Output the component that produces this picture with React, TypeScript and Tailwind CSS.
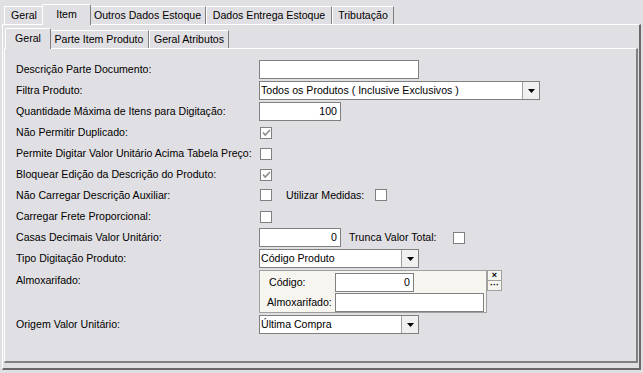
import React from "react";

function Check({ checked }: { checked?: boolean }) {
  return (
    <div className="w-[12px] h-[12px] border border-[#808080] bg-white flex items-center justify-center">
      {checked ? (
        <svg width="9" height="8" viewBox="0 0 9 8">
          <path d="M1 3.5 L3.2 6 L8 1" fill="none" stroke="#8a8a8a" strokeWidth="1.6" />
        </svg>
      ) : null}
    </div>
  );
}

function Arrow() {
  return (
    <div className="w-[17px] border-l border-[#a0a0a0] bg-[#f0f0f0] flex items-center justify-center">
      <svg width="7" height="4" viewBox="0 0 7 4">
        <path d="M0 0 H7 L3.5 4 Z" fill="#000" />
      </svg>
    </div>
  );
}

function Select({ value, width }: { value: string; width: string }) {
  return (
    <div className={`${width} h-[19px] border border-[#808080] bg-white flex`}>
      <div className="flex-1 pl-[1px] leading-[17px]">{value}</div>
      <Arrow />
    </div>
  );
}

function Input({ value, width, right }: { value?: string; width: string; right?: boolean }) {
  return (
    <div
      className={`${width} h-[19px] border border-[#808080] bg-white leading-[17px] px-[3px] ${
        right ? "text-right" : ""
      }`}
    >
      {value}
    </div>
  );
}

function Row({ label, children, tall }: { label: string; children: React.ReactNode; tall?: boolean }) {
  return (
    <div className={`flex ${tall ? "items-start h-[45px]" : "items-center h-[21px]"}`}>
      <div className={`w-[243px] ${tall ? "pt-[4px]" : ""}`}>{label}</div>
      <div className="flex items-center">{children}</div>
    </div>
  );
}

function Tab({ label, active, w }: { label: string; active?: boolean; w: string }) {
  return active ? (
    <div
      className={`${w} h-[21px] -mx-[2px] -mb-px relative z-10 bg-[#e0dfe3] border-t border-l border-white border-r border-r-[#808080] rounded-t-[2px] flex justify-center pt-[2px]`}
    >
      {label}
    </div>
  ) : (
    <div
      className={`${w} h-[18px] bg-[#e0dfe3] border-t border-l border-white border-r border-r-[#808080] flex justify-center items-center`}
    >
      {label}
    </div>
  );
}

export default function App() {
  const copy = {
    outerTabs: ["Geral", "Item", "Outros Dados Estoque", "Dados Entrega Estoque", "Tributação"],
    innerTabs: ["Geral", "Parte Item Produto", "Geral Atributos"],
  };

  return (
    <div className="w-[643px] h-[373px] bg-[#e0dfe3] text-black text-[10.6px] whitespace-nowrap font-['Liberation_Sans',Arial,sans-serif] pt-[3px] px-[2px] overflow-hidden">
      {/* top tabs */}
      <div className="flex items-end h-[21px] pl-[2px]">
        <Tab label={copy.outerTabs[0]} w="w-[40px]" />
        <Tab label={copy.outerTabs[1]} w="w-[49px]" active />
        <Tab label={copy.outerTabs[2]} w="w-[117px]" />
        <Tab label={copy.outerTabs[3]} w="w-[126px]" />
        <Tab label={copy.outerTabs[4]} w="w-[62px]" />
      </div>

      <div className="h-[346px] border-t border-l border-white border-r-2 border-b-2 border-r-[#696969] border-b-[#696969] px-[1px] pt-[2px]">
        {/* inner tabs */}
        <div className="flex items-end h-[21px] pl-[3px]">
          <Tab label={copy.innerTabs[0]} w="w-[46px]" active />
          <Tab label={copy.innerTabs[1]} w="w-[100px]" />
          <Tab label={copy.innerTabs[2]} w="w-[80px]" />
        </div>

        <div className="h-[315px] border-t border-l border-white border-r-2 border-b-2 border-r-[#808080] border-b-[#808080] pl-[11px] pt-[10px]">
          <Row label="Descrição Parte Documento:">
            <Input width="w-[160px]" />
          </Row>
          <Row label="Filtra Produto:">
            <Select value="Todos os Produtos ( Inclusive Exclusivos )" width="w-[281px]" />
          </Row>
          <Row label="Quantidade Máxima de Itens para Digitação:">
            <Input value="100" width="w-[82px]" right />
          </Row>
          <Row label="Não Permitir Duplicado:">
            <div className="pl-[1px]"><Check checked /></div>
          </Row>
          <Row label="Permite Digitar Valor Unitário Acima Tabela Preço:">
            <div className="pl-[1px]"><Check /></div>
          </Row>
          <Row label="Bloquear Edição da Descrição do Produto:">
            <div className="pl-[1px]"><Check checked /></div>
          </Row>
          <Row label="Não Carregar Descrição Auxiliar:">
            <div className="pl-[1px] flex items-center">
              <Check />
              <span className="ml-[14px] w-[89px]">Utilizar Medidas:</span>
              <Check />
            </div>
          </Row>
          <Row label="Carregar Frete Proporcional:">
            <div className="pl-[1px]"><Check /></div>
          </Row>
          <Row label="Casas Decimais Valor Unitário:">
            <Input value="0" width="w-[82px]" right />
            <span className="ml-[8px] w-[104px]">Trunca Valor Total:</span>
            <Check />
          </Row>
          <Row label="Tipo Digitação Produto:">
            <Select value="Código Produto" width="w-[160px]" />
          </Row>
          <Row label="Almoxarifado:" tall>
            <div className="flex items-start pt-[1px]">
              <div className="w-[228px] h-[43px] border border-[#a0a0a0] bg-[#f6f5f0] pt-[2px] pl-[7px] pr-[2px]">
                <div className="flex items-center h-[19px]">
                  <span className="w-[68px] pl-[2px]">Código:</span>
                  <Input value="0" width="w-[79px]" right />
                </div>
                <div className="flex items-center h-[19px] mt-px">
                  <span className="w-[68px]">Almoxarifado:</span>
                  <Input width="w-[150px]" />
                </div>
              </div>
              <div className="flex flex-col w-[15px] border border-[#a0a0a0] bg-[#f6f5f0]">
                <div className="h-[10px] border-b border-[#a0a0a0] flex items-center justify-center text-[9px] leading-none font-bold">×</div>
                <div className="h-[9px] flex items-center justify-center text-[9px] leading-none font-bold">···</div>
              </div>
            </div>
          </Row>
          <Row label="Origem Valor Unitário:">
            <Select value="Última Compra" width="w-[160px]" />
          </Row>
        </div>
      </div>
    </div>
  );
}
